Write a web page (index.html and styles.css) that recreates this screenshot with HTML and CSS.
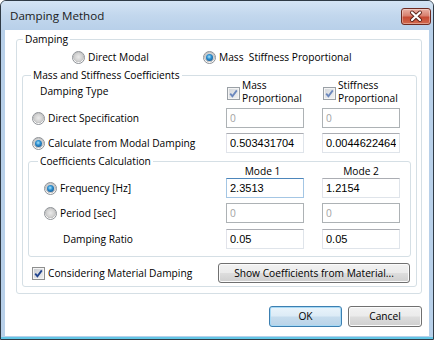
FILE: index.html
```html
<!DOCTYPE html>
<html lang="en">
<head>
    <meta charset="UTF-8">
    <title>Damping Method</title>
    <link rel="stylesheet" href="styles.css">
</head>
<body>
<div class="window">
    <div class="titlebar">
        <span class="title">Damping Method</span>
        <span class="close">
            <svg width="28" height="15" viewBox="0 0 28 15">
                <path d="M10 3.5L18 11M18 3.5L10 11" stroke="#5a2219" stroke-width="4" stroke-linecap="round"/>
                <path d="M10 3.5L18 11M18 3.5L10 11" stroke="#fff" stroke-width="2.2" stroke-linecap="round"/>
            </svg>
        </span>
    </div>
    <div class="client">
        <fieldset class="group damping">
            <legend>Damping</legend>
            <div class="method-row">
                <label class="opt"><span class="radio"></span>Direct Modal</label>
                <label class="opt"><span class="radio on"></span>Mass&nbsp; Stiffness Proportional</label>
            </div>

            <fieldset class="group coeffs">
                <legend>Mass and Stiffness Coefficients</legend>
                <div class="row type-row">
                    <div class="type-label">Damping Type</div>
                    <label class="check-cell">
                        <span class="check dim">
                            <svg width="11" height="11" viewBox="0 0 11 11"><path d="M2.2 5.6L4.4 8.2L8.8 2.4" fill="none" stroke="#6b87bd" stroke-width="1.8"/></svg>
                        </span>
                        <span>Mass<br>Proportional</span>
                    </label>
                    <label class="check-cell">
                        <span class="check dim">
                            <svg width="11" height="11" viewBox="0 0 11 11"><path d="M2.2 5.6L4.4 8.2L8.8 2.4" fill="none" stroke="#6b87bd" stroke-width="1.8"/></svg>
                        </span>
                        <span>Stiffness<br>Proportional</span>
                    </label>
                </div>
                <div class="row">
                    <label class="opt"><span class="radio"></span>Direct Specification</label>
                    <input class="field" value="0" disabled>
                    <input class="field" value="0" disabled>
                </div>
                <div class="row second">
                    <label class="opt"><span class="radio on"></span>Calculate from Modal Damping</label>
                    <input class="field" value="0.503431704" readonly>
                    <input class="field" value="0.00446224642" readonly>
                </div>

                <fieldset class="group calc">
                    <legend>Coefficients Calculation</legend>
                    <div class="row mode-row">
                        <span></span>
                        <span class="mode first">Mode 1</span>
                        <span class="mode">Mode 2</span>
                    </div>
                    <div class="row">
                        <label class="opt"><span class="radio on"></span>Frequency [Hz]</label>
                        <input class="field focus" value="2.3513" readonly>
                        <input class="field" value="1.2154" readonly>
                    </div>
                    <div class="row second">
                        <label class="opt"><span class="radio"></span>Period [sec]</label>
                        <input class="field" value="0" disabled>
                        <input class="field" value="0" disabled>
                    </div>
                    <div class="row third">
                        <span class="ratio-label">Damping Ratio</span>
                        <input class="field" value="0.05" readonly>
                        <input class="field" value="0.05" readonly>
                    </div>
                </fieldset>

                <div class="material-row">
                    <label class="opt">
                        <span class="check">
                            <svg width="11" height="11" viewBox="0 0 11 11"><path d="M2.2 5.6L4.4 8.2L8.8 2.4" fill="none" stroke="#21448f" stroke-width="1.8"/></svg>
                        </span>
                        Considering Material Damping
                    </label>
                    <button class="btn wide">Show Coefficients from Material...</button>
                </div>
            </fieldset>
        </fieldset>

        <div class="actions">
            <button class="btn default ok">OK</button>
            <button class="btn cancel">Cancel</button>
        </div>
    </div>
</div>
</body>
</html>
```

FILE: styles.css
```css
* {
    box-sizing: border-box;
}

body {
    margin: 0;
    background: #fff;
    color: #000;
    font: 10.2px/13px "Open Sans", "Noto Sans", sans-serif;
}

/* window frame */
.window {
    width: 434px;
    height: 340px;
    border: 1px solid #2f3a45;
    border-radius: 6px 6px 0 0;
    background: linear-gradient(to bottom, #b8d0e9 calc(100% - 2px), #62c6e6 calc(100% - 2px));
    display: flex;
    flex-direction: column;
}

.titlebar {
    height: 29px;
    display: flex;
    align-items: center;
    padding: 0 2px 0 9px;
    border-radius: 5px 5px 0 0;
    background: linear-gradient(#d4e4f4, #c2d7ed 50%, #b8d0e9);
}

.title {
    flex: 1;
    font-size: 11.6px;
    color: #1b1b1b;
}

.close {
    width: 30px;
    height: 17px;
    margin-top: 1px;
    border: 1px solid #6e2a20;
    border-radius: 3px;
    background: linear-gradient(#e9b0a4, #d8806f 45%, #c64a34 55%, #d26a4e);
    box-shadow: inset 0 0 0 1px rgba(255, 255, 255, 0.35);
}

.close svg {
    display: block;
}

.client {
    flex: 1;
    margin: 0 4px 3px 4px;
    background: #fff;
}

/* group boxes */
.group {
    margin: 0;
    padding: 0;
    min-width: 0;
    border: 1px solid #d5dfe5;
    border-radius: 3px;
}

.group legend {
    padding: 0 2px;
    line-height: 14px;
}

.damping {
    width: 406px;
    margin: 2px 0 0 11px;
    padding: 0 0 6px 5px;
}

.damping > legend {
    margin-left: 1px;
}

.coeffs {
    width: 395px;
    margin-top: 3px;
    padding: 0 0 3px 5px;
}

.coeffs > legend {
    margin-left: 3px;
}

.calc {
    width: 383px;
    margin-top: 1px;
    padding: 0 0 7px 9px;
}

/* option rows */
.method-row {
    display: flex;
    align-items: center;
    height: 19px;
    padding: 3px 0 0 50px;
}

.method-row .opt:first-child {
    width: 131px;
}

.opt {
    display: flex;
    align-items: center;
    white-space: nowrap;
}

.row {
    display: grid;
    grid-template-columns: 176px 78px 78px;
    column-gap: 18px;
    align-items: center;
    height: 20px;
    margin-top: 3px;
    padding-left: 4px;
}

.row.second {
    margin-top: 5px;
}

.calc .row {
    grid-template-columns: 164px 78px 78px;
    padding-left: 6px;
    margin-top: 0;
}

.calc .row.second {
    margin-top: 5px;
}

.calc .row.third {
    margin-top: 6px;
}

.type-row {
    height: 26px;
    margin-top: -3px;
    align-items: start;
}

.type-label {
    padding: 6px 0 0 8px;
}

.check-cell {
    display: flex;
    align-items: flex-start;
}

.check-cell .check {
    margin: 8px 2px 0 1px;
}

.calc .mode-row {
    height: 13px;
    margin-top: -3px;
}

.mode {
    text-align: center;
}

.mode.first {
    padding-right: 5px;
}

.ratio-label {
    padding-left: 19px;
}

/* radio and check marks */
.radio {
    width: 13px;
    height: 13px;
    margin-right: 3px;
    border: 1px solid #8d9196;
    border-radius: 50%;
    background: radial-gradient(circle at 50% 45%, #eaeaea 0, #d2d2d2 45%, #c2c2c2 62%, #fafafa 66%);
    display: grid;
    place-items: center;
    flex: none;
}

.radio.on::after {
    content: "";
    width: 7px;
    height: 7px;
    border-radius: 50%;
    background: radial-gradient(circle at 45% 40%, #a9e4fb 0, #2c8fd0 40%, #0b3f78 100%);
}

.check {
    width: 13px;
    height: 13px;
    margin-right: 3px;
    border: 1px solid #8e8f8f;
    background: linear-gradient(135deg, #c6c9cd, #f2f2f3);
    box-shadow: inset 0 0 0 1px #f4f4f4;
    flex: none;
}

.check svg {
    display: block;
}

.check.dim {
    border-color: #9aa0a6;
    background: linear-gradient(135deg, #d3d6da, #f2f3f4);
}

/* text boxes */
.field {
    width: 78px;
    height: 20px;
    margin: 0;
    padding: 0 3px;
    border: 1px solid #dfe4ea;
    border-top-color: #abadb3;
    border-left-color: #e2e3ea;
    background: #fff;
    color: #000;
    font: 11px "Liberation Sans", Arial, sans-serif;
    outline: none;
}

.field:disabled {
    border-color: #adb2b5;
    color: #a3a3a3;
    background: #fff;
    font-family: "Open Sans", sans-serif;
    font-size: 10.2px;
}

.field.focus {
    border-color: #a4c6e4;
    border-top-color: #4d86bb;
}

/* material row */
.material-row {
    display: flex;
    align-items: center;
    height: 20px;
    margin-top: 6px;
    padding-left: 4px;
}

.material-row .opt {
    width: 186px;
}

/* buttons */
.btn {
    height: 20px;
    padding: 0;
    border: 1px solid #707070;
    border-radius: 3px;
    background: linear-gradient(#f2f2f2, #ebebeb 48%, #dddddd 52%, #cfcfcf);
    box-shadow: inset 0 0 0 1px #fbfbfb;
    color: #000;
    font: inherit;
}

.btn.wide {
    width: 192px;
}

.actions {
    display: flex;
    justify-content: flex-end;
    gap: 6px;
    width: 406px;
    margin: 12px 0 0 11px;
}

.actions .btn {
    height: 21px;
}

.btn.ok {
    width: 73px;
}

.btn.cancel {
    width: 74px;
}

.btn.default {
    border-color: #3c7fb1;
    background: linear-gradient(#eaf4fb, #dcebf6 48%, #c6dced 52%, #b9d3e8);
    box-shadow: inset 0 0 0 1px #a7d9f5;
}
```
